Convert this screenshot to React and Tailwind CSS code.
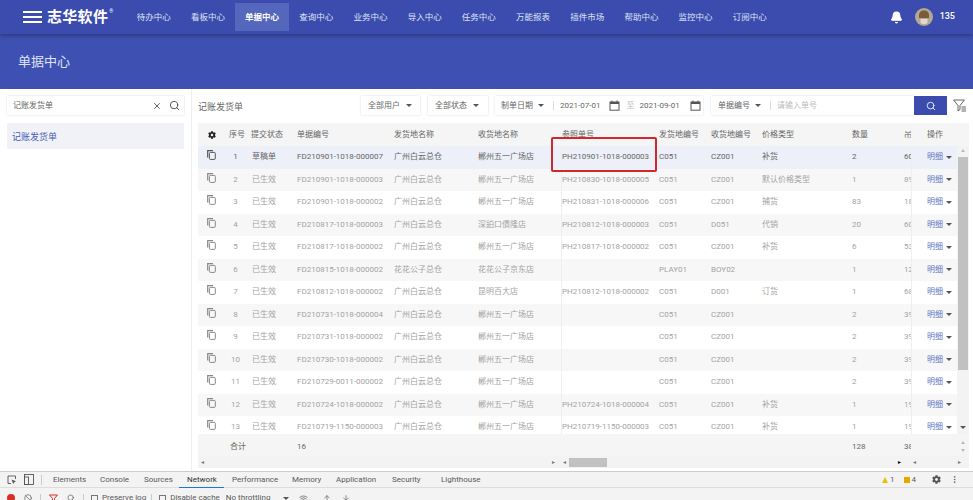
import React from 'react';
import { Bell, Search, X, Wifi, ArrowUp, ArrowDown, MoreVertical, Ban } from 'lucide-react';
import { FaCog } from 'react-icons/fa';

const navItems = ['待办中心', '看板中心', '单据中心', '查询中心', '业务中心', '导入中心', '任务中心', '万能报表', '插件市场', '帮助中心', '监控中心', '订阅中心'];

const rows = [
  ['1', '草稿单', 'FD210901-1018-000007', '广州白云总仓', '郴州五一广场店', 'PH210901-1018-000003', 'C051', 'CZ001', '补货', '2', '60'],
  ['2', '已生效', 'FD210901-1018-000003', '广州白云总仓', '郴州五一广场店', 'PH210830-1018-000005', 'C051', 'CZ001', '默认价格类型', '1', '89'],
  ['3', '已生效', 'FD210901-1018-000002', '广州白云总仓', '郴州五一广场店', 'PH210831-1018-000006', 'C051', 'CZ001', '捕货', '83', '18'],
  ['4', '已生效', 'FD210817-1018-000003', '广州白云总仓', '深鉑口僓隆店', 'PH210812-1018-000003', 'C051', 'D051', '代销', '20', '60'],
  ['5', '已生效', 'FD210817-1018-000002', '广州白云总仓', '郴州五一广场店', 'PH210817-1018-000002', 'C051', 'CZ001', '补货', '6', '53'],
  ['6', '已生效', 'FD210815-1018-000002', '花花公子总仓', '花花公子京东店', '', 'PLAY01', 'BOY02', '', '1', '12'],
  ['7', '已生效', 'FD210812-1018-000002', '广州白云总仓', '昆明百大店', 'PH210812-1018-000002', 'C051', 'D001', '订货', '1', '68'],
  ['8', '已生效', 'FD210731-1018-000004', '广州白云总仓', '郴州五一广场店', '', 'C051', 'CZ001', '', '2', '39'],
  ['9', '已生效', 'FD210731-1018-000002', '广州白云总仓', '郴州五一广场店', '', 'C051', 'CZ001', '', '2', '39'],
  ['10', '已生效', 'FD210730-1018-000002', '广州白云总仓', '郴州五一广场店', '', 'C051', 'CZ001', '', '2', '39'],
  ['11', '已生效', 'FD210729-0011-000002', '广州白云总仓', '郴州五一广场店', '', 'C051', 'CZ001', '', '2', '39'],
  ['12', '已生效', 'FD210724-1018-000002', '广州白云总仓', '郴州五一广场店', 'PH210724-1018-000004', 'C051', 'CZ001', '补货', '1', '19'],
  ['13', '已生效', 'FD210719-1150-000003', '广州白云总仓', '郴州五一广场店', 'PH210719-1150-000003', 'C051', 'CZ001', '补货', '1', '19'],
];

const devTabs = [
  ['Elements', 'w-[47px]'],
  ['Console', 'w-[44px]'],
  ['Sources', 'w-[43px]'],
  ['Network', 'w-[45px]'],
  ['Performance', 'w-[60px]'],
  ['Memory', 'w-[44px]'],
  ['Application', 'w-[56px]'],
  ['Security', 'w-[49px]'],
  ['Lighthouse', 'w-[50px]'],
];

const Caret = ({ className = '' }) => (
  <span className={`inline-block w-0 h-0 border-x-[3px] border-x-transparent border-t-[3px] border-t-[#555] ${className}`} />
);

const CalendarIcon = () => (
  <svg width="11" height="11" viewBox="0 0 11 11" className="shrink-0">
    <rect x="1" y="2" width="9" height="8.2" fill="none" stroke="#555" strokeWidth="1" />
    <rect x="1" y="2" width="9" height="2" fill="#555" />
    <rect x="2.5" y="0.5" width="1" height="2" fill="#555" />
    <rect x="7.5" y="0.5" width="1" height="2" fill="#555" />
  </svg>
);

const CopyIcon = ({ color }) => (
  <svg width="9" height="10" viewBox="0 0 9 10" className="shrink-0">
    <path d="M0.7 7.5V0.7H6" fill="none" stroke={color} strokeWidth="1.2" />
    <rect x="2.4" y="2.4" width="5.9" height="7" rx="1" fill="none" stroke={color} strokeWidth="1" />
  </svg>
);

const FilterListIcon = () => (
  <svg width="13" height="14" viewBox="0 0 13 14" className="ml-[6px] shrink-0">
    <path d="M0.6 1H11.4L7 6.5V10.5L5 12V6.5Z" fill="none" stroke="#555" strokeWidth="0.9" />
    <path d="M8.5 8H13M8.5 10H13M8.5 12H13" stroke="#555" strokeWidth="0.9" />
  </svg>
);

const Avatar = () => (
  <svg width="18" height="18" viewBox="0 0 18 18" className="ml-[12px] shrink-0 rounded-full">
    <rect width="18" height="18" fill="#b3a893" />
    <path d="M4 10C3.5 5 5 2.5 9 2.5S14.5 5 14 10Z" fill="#7a5c3c" />
    <path d="M5.5 11H12.5V15C11 16.5 7 16.5 5.5 15Z" fill="#e4d8c6" />
  </svg>
);

const Table = () => (
  <div className="relative flex-1 mt-[8px] text-[8px] leading-none">
    {/* header */}
    <div className="flex h-[23px] items-center bg-[#f5f5f5] text-[#666]">
      <div className="w-[27px] flex justify-center"><FaCog size={8} className="text-[#222]" /></div>
      <div className="w-[27px] pl-[4px]">序号</div>
      <div className="w-[45px] -ml-px mr-px">提交状态</div>
      <div className="w-[97px]">单据编号</div>
      <div className="w-[84px]">发货地名称</div>
      <div className="w-[84px]">收货地名称</div>
      <div className="w-[97px]">参照单号</div>
      <div className="w-[52px]">发货地编号</div>
      <div className="w-[51px]">收货地编号</div>
      <div className="w-[90px]">价格类型</div>
      <div className="w-[52px]">数量</div>
      <div className="w-[7px] overflow-hidden whitespace-nowrap">吊牌</div>
      <div className="w-[46px] pl-[16px]">操作</div>
    </div>
    <div className="mr-[12px]">
      {rows.map((r, i) => (
        <div
          key={r[0]}
          className={`flex h-[22.5px] items-center ${i === 0 ? 'bg-[#edf0f8] text-[#666]' : i % 2 === 0 ? 'bg-white text-[#a3a3a3]' : 'bg-[#f7f7f7] text-[#a3a3a3]'}`}
        >
          <div className="w-[27px] flex justify-center pb-[4px]"><CopyIcon color={i === 0 ? '#555' : '#888'} /></div>
          <div className="w-[27px] text-center pr-[6px]">{r[0]}</div>
          <div className="w-[45px]">{r[1]}</div>
          <div className="w-[97px] whitespace-nowrap">{r[2]}</div>
          <div className="w-[84px]">{r[3]}</div>
          <div className="w-[83px]">{r[4]}</div>
          <div className="w-[98px] h-full flex items-center whitespace-nowrap border-l border-[#eee]">{r[5]}</div>
          <div className="w-[52px]">{r[6]}</div>
          <div className="w-[51px]">{r[7]}</div>
          <div className="w-[90px]">{r[8]}</div>
          <div className="w-[52px]">{r[9]}</div>
          <div className="w-[7px] overflow-hidden">{r[10]}</div>
          <div className="w-[46px] h-full flex items-center gap-[3px] pl-[15px] text-[#6272c4] border-l border-[#eee]">
            <span className="whitespace-nowrap">明细</span><Caret className="border-x-[3.5px] border-t-[3.5px]" />
          </div>
        </div>
      ))}
    </div>
    {/* footer */}
    <div className="flex h-[22px] -mt-[4.5px] pt-[3px] items-center bg-[#f5f5f5] text-[#666] relative">
      <div className="w-[32px]" />
      <div className="w-[67px]">合计</div>
      <div className="w-[555px]">16</div>
      <div className="w-[52px]">128</div>
      <div className="w-[7px] overflow-hidden">38</div>
      <div className="ml-auto w-[12px] h-full flex flex-col items-center justify-center gap-[5px]">
        <span className="w-0 h-0 border-x-[2.5px] border-x-transparent border-b-[3px] border-b-[#bbb]" />
        <span className="w-0 h-0 border-x-[2.5px] border-x-transparent border-t-[3px] border-t-[#bbb]" />
      </div>
    </div>
    <div className="flex h-[12px] items-center bg-[#f3f3f3] text-[#777] text-[6px]">
      <span className="w-[354px] pl-[3px]">◂</span>
      <span className="w-[11px]">▸</span>
      <span className="w-[6px]">◂</span>
      <div className="w-[38px] h-[9px] bg-[#c1c1c1]" />
      <span className="w-[306px] text-right pr-[12px] text-black">▸</span>
      <span className="w-[45px]">◂</span>
      <span>▸</span>
    </div>
    {/* vertical scrollbar */}
    <div className="absolute right-0 top-[23px] w-[12px] h-[288px] bg-[#f3f3f3] flex flex-col items-center">
      <span className="w-0 h-0 mt-[3px] border-x-[2.5px] border-x-transparent border-b-[3px] border-b-[#bbb]" />
      <div className="w-[10px] h-[213px] bg-[#c1c1c1] mt-[5px]" />
      <div className="mt-auto mb-[5px] leading-none flex"><Caret /></div>
    </div>
    {/* red highlight */}
    <div className="absolute left-[353px] top-[14px] w-[106px] h-[35px] border-[2.5px] border-[#d1272d] rounded-[2px]" />
  </div>
);

export default function App() {
  return (
    <div className="w-[973px] h-[500px] overflow-hidden bg-white flex flex-col font-['Roboto','Noto_Sans_CJK_SC',sans-serif]">
      <header className="h-[34px] shrink-0 bg-[#3b4cae] flex items-center shadow-[0_2px_4px_rgba(0,0,0,0.3)] relative z-10 text-white">
        <div className="w-[19px] h-[12px] ml-[23px] flex flex-col justify-between">
          <span className="h-[2px] bg-white" /><span className="h-[2px] bg-white" /><span className="h-[2px] bg-white" />
        </div>
        <span className="ml-[5px] text-[15px] font-bold tracking-[0.3px] whitespace-nowrap">志华软件</span>
        <span className="text-[5px] self-start mt-[8px] ml-[1px]">®</span>
        <nav className="flex ml-[13.5px] h-full text-[8.5px] text-[#dfe3f5]">
          {navItems.map((n, i) => (
            <div key={n} className={`w-[54.2px] flex items-center justify-center my-[3px] ${i === 2 ? 'bg-[#5567bc] font-bold text-white' : ''}`}>{n}</div>
          ))}
        </nav>
        <div className="ml-auto flex items-center mr-[18px]">
          <Bell size={13} fill="white" />
          <Avatar />
          <span className="ml-[7px] text-[9px] font-medium">135</span>
        </div>
      </header>

      <div className="h-[55px] shrink-0 bg-[#3e51b3] flex items-center pl-[18px] text-[13px] text-[#dfe3f5]">单据中心</div>

      <main className="flex-1 flex min-h-0 text-[#666]">
        <aside className="w-[192px] shrink-0 border-r border-[#eee] px-[7px] pt-[7px]">
          <div className="h-[19px] flex items-center pl-[6px] pr-[4px] shadow-[0_0_2px_rgba(0,0,0,0.15)] text-[8px]">
            <span>记账发货单</span>
            <X size={10} className="ml-auto text-[#444]" />
            <Search size={11} className="ml-[7px] text-[#444]" />
          </div>
          <div className="h-[26px] mt-[8px] bg-[#f0f2f8] flex items-center pl-[5px] pt-[3px] text-[9px] text-[#4a5cb5]">记账发货单</div>
        </aside>
        <section className="flex-1 flex flex-col pl-[6px] pr-[4px] pt-[7px] min-w-0">
          <div className="flex items-center h-[19px] text-[8px]">
            <span className="text-[9px] w-[163px] pt-[4px]">记账发货单</span>
            <div className="w-[59px] h-[19px] flex items-center pl-[7px] gap-[6px] shadow-[0_0_2px_rgba(0,0,0,0.15)]">全部用户<Caret /></div>
            <div className="w-[60px] h-[19px] ml-[8px] flex items-center pl-[7px] gap-[6px] shadow-[0_0_2px_rgba(0,0,0,0.15)]">全部状态<Caret /></div>
            <div className="w-[208px] h-[19px] ml-[7px] flex items-center pl-[6px] shadow-[0_0_2px_rgba(0,0,0,0.15)]">
              <span>制单日期</span><Caret className="ml-[5px]" />
              <span className="ml-[9px] w-px h-[9px] bg-[#ddd]" />
              <span className="ml-[6px]">2021-07-01</span>
              <span className="ml-[9px]"><CalendarIcon /></span>
              <span className="ml-[6px] text-[#bbb]">至</span>
              <span className="ml-[5px]">2021-09-01</span>
              <span className="ml-[10px]"><CalendarIcon /></span>
            </div>
            <div className="w-[203px] h-[19px] ml-[8px] flex items-center pl-[7px] shadow-[0_0_2px_rgba(0,0,0,0.15)]">
              <span>单据编号</span><Caret className="ml-[5px]" />
              <span className="ml-[9px] w-px h-[9px] bg-[#ddd]" />
              <span className="ml-[6px] text-[#bbb]">请输入单号</span>
            </div>
            <div className="w-[33px] h-[19px] bg-[#3b4cae] flex items-center justify-center">
              <Search size={10} className="text-white" />
            </div>
            <FilterListIcon />
          </div>
          <Table />
        </section>
      </main>

      <footer className="h-[29px] shrink-0 overflow-hidden bg-[#f3f3f3] border-t border-[#ccc] text-[#5a5a5a] text-[8px]">
        <div className="h-[16px] flex items-center border-b border-[#ddd]">
          <svg width="10" height="10" viewBox="0 0 10 10" className="ml-[7px] shrink-0">
            <path d="M4 8.5H1V1H8.5V4" fill="none" stroke="#555" strokeWidth="0.9" />
            <path d="M4.5 4.5L9 6.3L7.2 7.2L6.3 9Z" fill="#555" />
          </svg>
          <svg width="10" height="11" viewBox="0 0 10 11" className="ml-[7px] shrink-0">
            <rect x="0.5" y="0.5" width="9" height="10" fill="none" stroke="#555" strokeWidth="0.9" />
            <rect x="0.5" y="3" width="4" height="7.5" fill="none" stroke="#555" strokeWidth="0.9" />
          </svg>
          <span className="w-px h-[10px] bg-[#ccc] ml-[7px]" />
          <div className="flex ml-[3px] h-full">
            {devTabs.map(([t, w]) => (
              <span key={t} className={`${w} pl-[8px] h-[16px] flex items-center ${t === 'Network' ? 'border-b border-[#1a73e8] text-[#333]' : ''}`}>{t}</span>
            ))}
          </div>
          <div className="ml-auto flex items-center mr-[14px]">
            <span className="w-0 h-0 border-x-[3.5px] border-x-transparent border-b-[6px] border-b-[#e6c200]" /><span className="ml-[2px]">1</span>
            <span className="ml-[9px] w-[6px] h-[6px] bg-[#e6a700]" /><span className="ml-[2px]">4</span>
            <FaCog size={9} className="ml-[16px] text-[#555]" />
            <MoreVertical size={9} className="ml-[9px]" />
          </div>
        </div>
        <div className="h-[20px] flex items-center">
          <span className="w-[8px] h-[8px] rounded-full bg-[#d93025] ml-[7px]" />
          <Ban size={8} className="ml-[9px]" />
          <span className="w-px h-[8px] bg-[#ccc] ml-[8px]" />
          <svg width="9" height="9" viewBox="0 0 9 9" className="ml-[8px] shrink-0">
            <path d="M0.5 1H8.5L5.5 4.5V8L3.5 7V4.5Z" fill="none" stroke="#d93025" strokeWidth="1" />
          </svg>
          <Search size={8} className="ml-[9px]" />
          <span className="w-px h-[8px] bg-[#ccc] ml-[8px]" />
          <span className="w-[7px] h-[7px] border border-[#777] ml-[7px]" />
          <span className="ml-[4px]">Preserve log</span>
          <span className="w-px h-[8px] bg-[#ccc] ml-[5px]" />
          <span className="w-[7px] h-[7px] border border-[#777] ml-[7px]" />
          <span className="ml-[4px]">Disable cache</span>
          <span className="ml-[6px]">No throttling</span>
          <Caret className="ml-[13px]" />
          <Wifi size={9} className="ml-[10px]" />
          <ArrowUp size={8} className="ml-[15px]" />
          <ArrowDown size={8} className="ml-[11px]" />
        </div>
      </footer>
    </div>
  );
}
